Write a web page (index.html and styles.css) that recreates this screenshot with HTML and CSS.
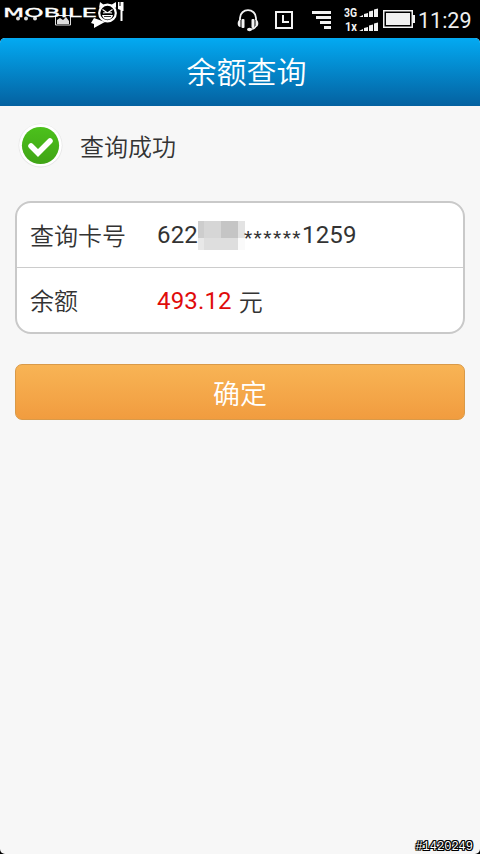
FILE: index.html
```html
<!DOCTYPE html>
<html lang="zh-CN">
<head>
  <meta charset="UTF-8">
  <meta name="viewport" content="width=device-width, initial-scale=1">
  <title>余额查询</title>
  <link rel="stylesheet" href="styles.css">
</head>
<body>

<div class="screen">
  <div class="status-bar">
    <svg class="logo" width="130" height="38" viewBox="0 0 130 38">
      <!-- notifications -->
      <g fill="#ddd">
        <circle cx="18" cy="18.500" r="2"/><circle cx="26" cy="18.500" r="2"/><circle cx="35" cy="18.500" r="2"/>
        <path d="M55.500 15.500h15v9.500h-15z" fill="none" stroke="#ddd"/>
        <path d="M57 24v-4l3-2 3 2 3-3 3 4v3z"/>
      </g>
      <text class="logo-text" x="3" y="17" textLength="94" lengthAdjust="spacingAndGlyphs">MOBILE</text>
      <!-- face -->
      <path d="M94 18l11 4-2 1-9 5v-4l-3-1z" fill="#fff"/>
      <path d="M99 8l1-6 4 3zM116 8V2l-5 3z" fill="#fff"/>
      <circle cx="107.500" cy="13" r="8.300" fill="#000" stroke="#fff" stroke-width="2.200"/>
      <path d="M102.500 9.500l4.500 3-4 .5M112.500 9.500l-4.500 3 4 .5" fill="none" stroke="#fff" stroke-width="1.200"/>
      <path d="M102 15h11c-1 6-10 6-11 0z" fill="#fff"/>
      <path d="M104 16.500h7" stroke="#000" stroke-width=".8"/>
      <path d="M118 2h1.500v4h1V2h3v9h-1v10h-2V10l-2.500-1z" fill="#fff"/>
    </svg>
    <div class="status-icons">
      <svg class="headset" width="22" height="23" viewBox="0 0 22 23">
        <path d="M3 11V9C3 4 7 1.200 11 1.200S19 4 19 9v2" fill="none" stroke="#f2f2f2" stroke-width="1.800"/>
        <path d="M3.500 10v8C-.5 18 0 11 3.500 10zM18.500 10v8c4 0 3.500-7 0-8z" fill="#f2f2f2"/>
        <rect x="4.500" y="10" width="3" height="9" rx="1" fill="#f2f2f2"/>
        <rect x="14.500" y="10" width="3" height="9" rx="1" fill="#f2f2f2"/>
        <path d="M19 17c-1 3-3 3.500-7 3.500" fill="none" stroke="#f2f2f2" stroke-width="1.400"/>
        <ellipse cx="12.500" cy="20.500" rx="2.500" ry="1.700" fill="#f2f2f2"/>
      </svg>
      <svg class="clock" width="19" height="19" viewBox="0 0 19 19" fill="none" stroke="#f2f2f2" stroke-width="2">
        <path d="M1 1h16v16H1zM8 4v7h6"/>
      </svg>
      <svg class="bars" width="19" height="18" viewBox="0 0 19 18" fill="#f2f2f2">
        <path d="M0 0h19v3H0zM4 5h15v3H4zM8 10h11v3H8zM12 15h7v3h-7z"/>
      </svg>
      <svg class="signal" width="36" height="32" viewBox="0 0 36 32" fill="#f2f2f2">
        <text class="net" x="0" y="13" textLength="13" lengthAdjust="spacingAndGlyphs">3G</text>
        <text class="net" x="1" y="27" textLength="12" lengthAdjust="spacingAndGlyphs">1x</text>
        <path d="M15 13l4-2v2h-4zM20 10l4-1v4h-4zM25 7.500l4-1v6.500h-4zM30 5.500l4-1v8.500h-4z"/>
        <path d="M15 27l4-2v2h-4zM20 24l4-1v4h-4zM25 21.500l4-1v6.500h-4zM30 19.500l4-1v8.500h-4z"/>
      </svg>
      <svg class="battery" width="32" height="18" viewBox="0 0 32 18">
        <path d="M.75.75h28.500v16.500H.75z" fill="none" stroke="#f2f2f2" stroke-width="1.500"/>
        <path d="M3 3h24v12H3zM29 5h3v8h-3z" fill="#f2f2f2"/>
      </svg>
      <span class="time">11:29</span>
    </div>
  </div>

  <div class="app">
    <h1 class="title">余额查询</h1>

    <div class="result">
      <svg width="46" height="46" viewBox="0 0 46 46">
        <defs>
          <linearGradient id="green" x1="0" y1="0" x2="0" y2="1">
            <stop offset="0" stop-color="#4cc11c"/>
            <stop offset="1" stop-color="#40a416"/>
          </linearGradient>
        </defs>
        <circle cx="23.500" cy="23.500" r="22" fill="#e6e6e6"/>
        <circle cx="23.500" cy="23.300" r="21.300" fill="#fff"/>
        <circle cx="23.500" cy="23.500" r="18.600" fill="url(#green)"/>
        <path d="M14 24l7 7L33 19" fill="none" stroke="#fff" stroke-width="5.500" stroke-linecap="round"/>
      </svg>
      <span>查询成功</span>
    </div>

    <div class="card">
      <div class="row">
        <span class="label">查询卡号</span>
        <span class="value">622<span class="mosaic"></span><span class="stars">******</span>1259</span>
      </div>
      <div class="row">
        <span class="label">余额</span>
        <span class="value"><span class="amount">493.12</span><span class="unit">元</span></span>
      </div>
    </div>

    <button class="confirm">确定</button>
  </div>

  <span class="stamp">#1420249</span>
</div>

</body>
</html>
```
FILE: styles.css
```css
html, body {
  margin: 0;
  padding: 0;
  background: #000;
}
.screen {
  position: relative;
  width: 480px;
  height: 854px;
  overflow: hidden;
  display: flex;
  flex-direction: column;
  background: #000;
  color: #333;
  font-family: Roboto, "Noto Sans CJK SC", sans-serif;
  font-weight: 350;
}
.status-bar {
  height: 38px;
  display: flex;
  justify-content: space-between;
}
.logo {
  display: block;
}
.logo-text {
  font: 12px "DejaVu Sans", sans-serif;
  fill: #fff;
  stroke: #fff;
  stroke-width: 0.3;
}
.status-icons {
  display: flex;
  align-items: flex-start;
  padding-right: 10px;
}
.headset {
  margin: 9px 16px 0 0;
}
.clock {
  margin: 11px 18px 0 0;
}
.bars {
  margin: 11px 13px 0 0;
}
.signal {
  margin: 4px 3px 0 0;
}
.net {
  font: bold 12px Roboto, sans-serif;
}
.battery {
  margin: 10px 3px 0 0;
}
.time {
  width: 52px;
  margin-top: 7px;
  font-size: 21.5px;
  font-weight: 400;
  line-height: 27px;
  color: #eee;
  white-space: nowrap;
}
.app {
  flex: 1;
  background: #f7f7f7;
  border-radius: 5px;
  overflow: hidden;
}
.title {
  height: 68px;
  margin: 0;
  background: linear-gradient(#03aaf2, #0461a0);
  color: #fff;
  font-size: 30px;
  font-weight: 350;
  line-height: 70px;
  text-align: center;
  text-indent: 13px;
}
.result {
  height: 95px;
  box-sizing: border-box;
  display: flex;
  align-items: flex-start;
  gap: 17px;
  padding: 16px 0 0 17px;
  font-size: 24px;
  line-height: 52px;
}
.card {
  box-sizing: border-box;
  height: 133px;
  margin: 0 15px;
  background: #fff;
  border: 2px solid #c9c9c9;
  border-radius: 16px;
}
.row {
  height: 64px;
  display: flex;
  align-items: center;
  padding-left: 13px;
  font-size: 24px;
}
.row + .row {
  border-top: 1px solid #ccc;
}
.label {
  width: 127px;
  padding-bottom: 2px;
}
.value {
  display: flex;
  align-items: center;
  font-weight: 400;
  letter-spacing: 0.15px;
}
.mosaic {
  width: 47px;
  height: 29px;
  background:
    linear-gradient(90deg, #cdcdcd 6px, #d6d6d6 6px 23px, #c5c5c5 23px 40px, #e3e3e3 40px) 0 0 / 47px 17px no-repeat,
    linear-gradient(90deg, #e8e8e8 6px, #dedede 6px 40px, #fafafa 40px) 0 17px / 47px 12px no-repeat;
}
.stars {
  margin-left: -1px;
  padding-top: 4px;
  font-size: 19px;
  letter-spacing: 1.5px;
}
.amount {
  padding-top: 2px;
  color: #e00b0b;
}
.unit {
  margin-left: 7px;
  font-weight: 350;
}
.confirm {
  display: block;
  box-sizing: border-box;
  width: 450px;
  height: 56px;
  margin: 30px 15px 0;
  padding: 0;
  border: 1px solid #d99a49;
  border-radius: 7px;
  background: linear-gradient(#f8b455, #f19c3f);
  color: #fff;
  font-family: inherit;
  font-size: 27px;
  font-weight: 350;
}
.stamp {
  position: absolute;
  right: 7px;
  bottom: 0;
  font: 12px/14px "Liberation Mono", monospace;
  color: #fff;
  text-shadow: 1px 0 #000, -1px 0 #000, 0 1px #000, 0 -1px #000, 1px 1px #000, -1px -1px #000, 1px -1px #000, -1px 1px #000;
}
```
